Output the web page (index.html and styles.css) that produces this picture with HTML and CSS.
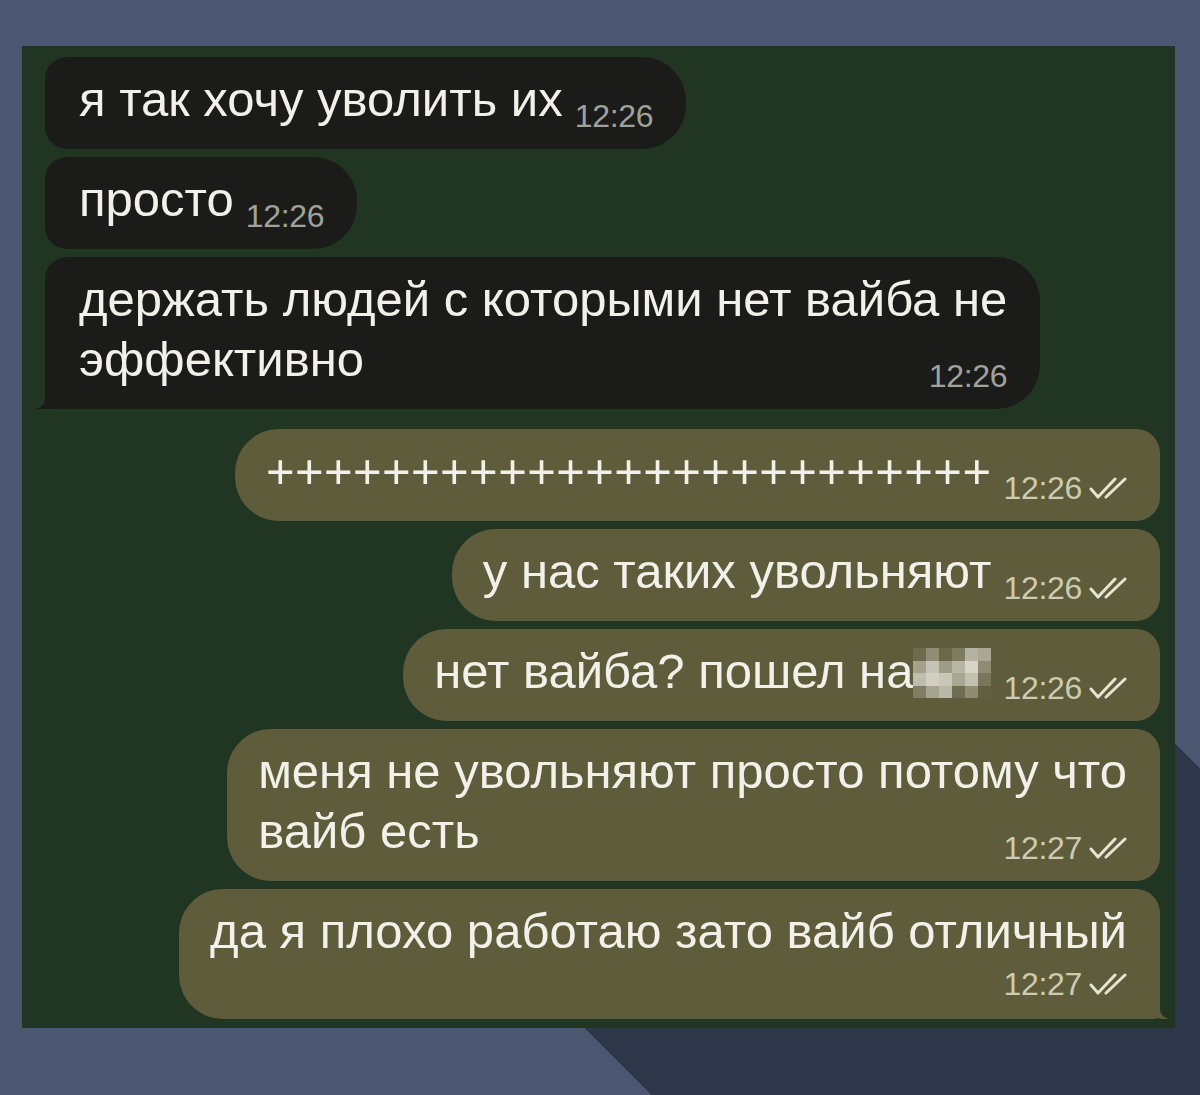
FILE: index.html
```html
<!DOCTYPE html>
<html lang="ru">
<head>
  <meta charset="UTF-8" />
  <meta name="viewport" content="width=device-width, initial-scale=1.0"/>
  <title>Чат</title>
  <link rel="stylesheet" href="styles.css">
</head>
<body>
  <div class="chat">

    <div class="group in">
      <div class="msg">я так хочу уволить их<span class="meta"><span class="time">12:26</span></span></div>
      <div class="msg">просто<span class="meta"><span class="time">12:26</span></span></div>
      <div class="msg tail">держать людей с которыми нет вайба не<br>эффективно<span class="meta"><span class="time">12:26</span></span></div>
    </div>

    <div class="group out">
      <div class="msg plus">+++++++++++++++++++++++++<span class="meta"><span class="time">12:26</span><svg class="ticks" viewBox="0 0 38 22"><path d="M2 12 L9 20 L26 2 M17 20 L36 2"/></svg></span></div>
      <div class="msg">у нас таких увольняют<span class="meta"><span class="time">12:26</span><svg class="ticks" viewBox="0 0 38 22"><path d="M2 12 L9 20 L26 2 M17 20 L36 2"/></svg></span></div>
      <div class="msg">нет вайба? пошел на<span class="mosaic"><span class="mosaic-grid"><i style="background:#6d6b4d"></i><i style="background:#8f8d74"></i><i style="background:#6a6848"></i><i style="background:#7d7b60"></i><i style="background:#b4b2a0"></i><i style="background:#a9a792"></i><i style="background:#a3a18c"></i><i style="background:#c4c3b4"></i><i style="background:#9e9c86"></i><i style="background:#b8b6a4"></i><i style="background:#d6d5c8"></i><i style="background:#8d8b72"></i><i style="background:#bfbeae"></i><i style="background:#d0cfc2"></i><i style="background:#c8c7b8"></i><i style="background:#a9a793"></i><i style="background:#c2c1b1"></i><i style="background:#77755a"></i><i style="background:#7f7d63"></i><i style="background:#a6a48f"></i><i style="background:#b9b8a6"></i><i style="background:#6f6d50"></i><i style="background:#8e8c73"></i><i style="background:#625f3f"></i></span></span><span class="meta"><span class="time">12:26</span><svg class="ticks" viewBox="0 0 38 22"><path d="M2 12 L9 20 L26 2 M17 20 L36 2"/></svg></span></div>
      <div class="msg">меня не увольняют просто потому что<br>вайб есть<span class="meta"><span class="time">12:27</span><svg class="ticks" viewBox="0 0 38 22"><path d="M2 12 L9 20 L26 2 M17 20 L36 2"/></svg></span></div>
      <div class="msg tail">да я плохо работаю зато вайб отличный<span class="meta under"><span class="time">12:27</span><svg class="ticks" viewBox="0 0 38 22"><path d="M2 12 L9 20 L26 2 M17 20 L36 2"/></svg></span></div>
    </div>

  </div>
</body>
</html>
```

FILE: styles.css
```css
html {
  height: 100%;
}

body {
  margin: 0;
  padding: 46px 0 0 22px;
  min-height: 100%;
  box-sizing: border-box;
  font-family: 'Liberation Sans', Arial, sans-serif;
  background:
    linear-gradient(45deg, transparent 107px, #2e374a 107px, #2e374a 726px, transparent 726px) right bottom / 700px 600px no-repeat,
    #4b5670;
}

.chat {
  width: 1153px;
  box-sizing: border-box;
  padding: 11px 15px 9px 23px;
  background: #213622;
  display: flex;
  flex-direction: column;
  gap: 20px;
}

.group {
  display: flex;
  flex-direction: column;
  gap: 8px;
}

.group.in {
  align-items: flex-start;
}

.group.out {
  align-items: flex-end;
}

.msg {
  position: relative;
  padding: 12px 33px 20px 34px;
  font-size: 49px;
  line-height: 60px;
  color: #f1f1ea;
  white-space: nowrap;
}

.in .msg {
  background: #1b1c19;
  border-radius: 22px 44px 44px 22px;
}

.out .msg {
  background: #5e5c3a;
  border-radius: 44px 24px 24px 44px;
  padding: 12px 33px 20px 31px;
}

.msg.plus {
  letter-spacing: 0.4px;
}

/* time + ticks sit on the last line, pushed to the right */
.meta {
  float: right;
  display: flex;
  align-items: center;
  gap: 7px;
  margin: 30px 0 -30px 12px;
  line-height: 34px;
  letter-spacing: 0;
}

.meta.under {
  float: none;
  justify-content: flex-end;
  margin: 6px 0 -2px;
}

.time {
  font-size: 32px;
  letter-spacing: -0.3px;
}

.in .time {
  color: #a1a29c;
}

.out .time {
  color: #cdcbb2;
}

.ticks {
  width: 38px;
  height: 22px;
  fill: none;
  stroke: #e6e4d2;
  stroke-width: 3;
  stroke-linecap: round;
  stroke-linejoin: round;
}

/* pixelated censor block */
.mosaic {
  display: inline-block;
  width: 78px;
  height: 50px;
  overflow: hidden;
  vertical-align: -10px;
}

.mosaic-grid {
  display: grid;
  grid-template-columns: repeat(6, 13px);
  grid-auto-rows: 12.5px;
}

.mosaic-grid i {
  display: block;
}

/* bubble tails on the last message of a group */
.in .msg.tail {
  border-bottom-left-radius: 6px;
}

.in .msg.tail::before {
  content: '';
  position: absolute;
  left: -8px;
  bottom: 0;
  width: 22px;
  height: 24px;
  background: #1b1c19;
  border-bottom-right-radius: 16px 14px;
}

.in .msg.tail::after {
  content: '';
  position: absolute;
  left: -12px;
  bottom: 0;
  width: 12px;
  height: 24px;
  background: #213622;
  border-bottom-right-radius: 10px;
}

.out .msg.tail {
  border-bottom-right-radius: 6px;
}

.out .msg.tail::before {
  content: '';
  position: absolute;
  right: -8px;
  bottom: 0;
  width: 22px;
  height: 24px;
  background: #5e5c3a;
  border-bottom-left-radius: 16px 14px;
}

.out .msg.tail::after {
  content: '';
  position: absolute;
  right: -12px;
  bottom: 0;
  width: 12px;
  height: 24px;
  background: #213622;
  border-bottom-left-radius: 10px;
}
```
